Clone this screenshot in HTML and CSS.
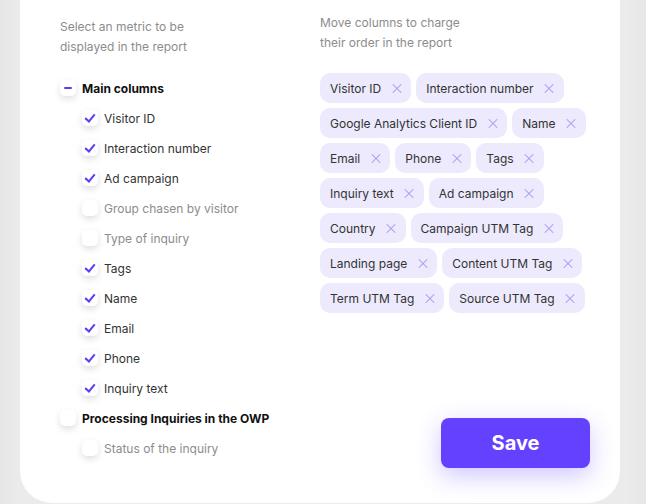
FILE: index.html
```html
<!DOCTYPE html>
<html lang="en">
<head>
    <meta charset="UTF-8">
    <meta name="viewport" content="width=device-width, initial-scale=1.0">
    <title>Report columns</title>
    <link rel="stylesheet" href="styles.css">
</head>
<body>

<div class="card">
    <div class="metrics">
        <p class="hint">Select an metric to be<br>displayed in the report</p>

        <ul class="tree">
            <li class="row group"><span class="box minus"></span>Main columns</li>
            <li class="row sub on"><span class="box checked"></span>Visitor ID</li>
            <li class="row sub on"><span class="box checked"></span>Interaction number</li>
            <li class="row sub on"><span class="box checked"></span>Ad campaign</li>
            <li class="row sub"><span class="box"></span>Group chasen by visitor</li>
            <li class="row sub"><span class="box"></span>Type of inquiry</li>
            <li class="row sub on"><span class="box checked"></span>Tags</li>
            <li class="row sub on"><span class="box checked"></span>Name</li>
            <li class="row sub on"><span class="box checked"></span>Email</li>
            <li class="row sub on"><span class="box checked"></span>Phone</li>
            <li class="row sub on"><span class="box checked"></span>Inquiry text</li>
            <li class="row group"><span class="box"></span>Processing Inquiries in the OWP</li>
            <li class="row sub"><span class="box"></span>Status of the inquiry</li>
        </ul>
    </div>

    <div class="order">
        <p class="hint hint-right">Move columns to charge<br>their order in the report</p>

        <div class="chips">
            <span class="chip">Visitor ID<i class="close"></i></span>
            <span class="chip">Interaction number<i class="close"></i></span>
            <span class="chip">Google Analytics Client ID<i class="close"></i></span>
            <span class="chip">Name<i class="close"></i></span>
            <span class="chip">Email<i class="close"></i></span>
            <span class="chip">Phone<i class="close"></i></span>
            <span class="chip">Tags<i class="close"></i></span>
            <span class="chip">Inquiry text<i class="close"></i></span>
            <span class="chip">Ad campaign<i class="close"></i></span>
            <span class="chip">Country<i class="close"></i></span>
            <span class="chip">Campaign UTM Tag<i class="close"></i></span>
            <span class="chip">Landing page<i class="close"></i></span>
            <span class="chip">Content UTM Tag<i class="close"></i></span>
            <span class="chip">Term UTM Tag<i class="close"></i></span>
            <span class="chip">Source UTM Tag<i class="close"></i></span>
        </div>

        <button class="save">Save</button>
    </div>
</div>

</body>
</html>
```

FILE: styles.css
```css
body {
    font-family: Inter, 'Noto Sans', sans-serif;
    margin: 0;
    height: 504px;
    overflow: hidden;
    background: linear-gradient(90deg, #e6e6e6 0%, #ebebeb 3%, #ebebeb 97%, #e6e6e6 100%);
}

.card {
    display: flex;
    margin: 0 26px 0 20px;
    height: 503px;
    padding-left: 40px;
    background-color: #fff;
    border-radius: 0 0 32px 32px;
    box-sizing: border-box;
}

.hint {
    margin: 17px 0 16px;
    font-size: 12px;
    line-height: 20px;
    color: #8c8c8c;
}

.hint-right {
    margin: 13px 0 20px;
}

.metrics {
    width: 260px;
}

.tree {
    list-style: none;
    margin: 0;
    padding: 0;
}

.row {
    display: flex;
    align-items: center;
    gap: 6px;
    height: 30px;
    font-size: 12px;
    color: #8c8c8c;
}

.row.on {
    color: #333;
}

.row.group {
    font-weight: 700;
    color: #111;
}

.row.sub {
    padding-left: 22px;
}

.box {
    position: relative;
    width: 16px;
    height: 16px;
    flex-shrink: 0;
    background-color: #fff;
    border-radius: 5px;
    box-shadow: 0 3px 7px rgba(0, 0, 0, 0.13);
}

.box.minus::after {
    content: '';
    position: absolute;
    left: 4px;
    top: 7px;
    width: 8px;
    height: 2px;
    border-radius: 1px;
    background-color: #5b3cf5;
}

.box.checked::after {
    content: '';
    position: absolute;
    left: 5px;
    top: 2px;
    width: 4px;
    height: 8px;
    border-right: 2px solid #5b3cf5;
    border-bottom: 2px solid #5b3cf5;
    transform: rotate(40deg);
}

.order {
    flex: 1;
    display: flex;
    flex-direction: column;
    padding-right: 30px;
}

.chips {
    display: flex;
    flex-wrap: wrap;
    gap: 5px;
    margin-right: -20px;
}

.chip {
    display: flex;
    align-items: center;
    height: 30px;
    padding: 0 10px 0 10px;
    background-color: #edeafd;
    border-radius: 10px;
    font-size: 12px;
    color: #333;
}

.close {
    position: relative;
    width: 9px;
    height: 9px;
    margin-left: 11px;
}

.close::before,
.close::after {
    content: '';
    position: absolute;
    left: -1.5px;
    top: 4px;
    width: 12px;
    height: 1px;
    background-color: #a497f5;
    transform: rotate(45deg);
}

.close::after {
    transform: rotate(-45deg);
}

.save {
    align-self: flex-end;
    width: 149px;
    height: 50px;
    margin-top: auto;
    margin-bottom: 35px;
    background-color: #6441ff;
    color: #fff;
    border: none;
    border-radius: 8px;
    font-family: Inter, sans-serif;
    font-size: 20px;
    font-weight: 700;
    cursor: pointer;
    box-shadow: 0 8px 24px rgba(100, 65, 255, 0.3);
}
```
